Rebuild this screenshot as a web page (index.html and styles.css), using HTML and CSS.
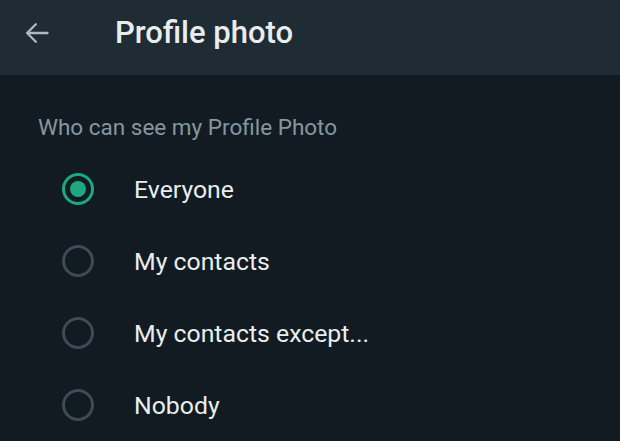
FILE: index.html
```html
<!DOCTYPE html>
<html>
<head>
    <link rel="stylesheet" href="styles.css">
</head>
<body>
  <header class="topbar">
    <button type="button" class="back" aria-label="Back">
      <svg width="28" height="28" viewBox="0 0 24 24" fill="none" xmlns="http://www.w3.org/2000/svg">
        <path d="M21 12H4" stroke="#aebac1" stroke-width="2" stroke-linecap="round"/>
        <path d="M11 4.5L3.5 12L11 19.5" stroke="#aebac1" stroke-width="2" stroke-linecap="round" stroke-linejoin="round"/>
      </svg>
    </button>
    <h1 class="title">Profile photo</h1>
  </header>

  <main class="content">
    <p class="section-label">Who can see my Profile Photo</p>

    <form class="options">
      <label class="option">
        <input type="radio" name="visibility" value="everyone" checked>
        <span class="radio"></span>
        <span class="option-text">Everyone</span>
      </label>
      <label class="option">
        <input type="radio" name="visibility" value="contacts">
        <span class="radio"></span>
        <span class="option-text">My contacts</span>
      </label>
      <label class="option">
        <input type="radio" name="visibility" value="except">
        <span class="radio"></span>
        <span class="option-text">My contacts except...</span>
      </label>
      <label class="option">
        <input type="radio" name="visibility" value="nobody">
        <span class="radio"></span>
        <span class="option-text">Nobody</span>
      </label>
    </form>
  </main>
</body>
</html>
```

FILE: styles.css
```css
body {
    margin: 0;
    background-color: #111b21;
    font-family: Roboto, "Noto Sans", sans-serif;
    color: #e9edef;
    height: 441px;
    overflow: hidden;
}

.topbar {
    height: 75px;
    background-color: #1f2c33;
    display: flex;
    align-items: center;
}

.back {
    background: none;
    border: none;
    padding: 0;
    margin-left: 23px;
    width: 28px;
    height: 28px;
    margin-top: -10px;
    display: flex;
}

.title {
    margin: 0 0 0 64px;
    margin-top: -10px;
    font-size: 31px;
    font-weight: 500;
    color: #e9edef;
}

.content {
    padding-top: 38px;
}

.section-label {
    margin: 0 0 0 38px;
    font-size: 22.5px;
    color: #8696a0;
    line-height: 28px;
}

.options {
    display: flex;
    flex-direction: column;
    padding-top: 12px;
}

.option {
    display: flex;
    align-items: center;
    height: 72px;
    padding-left: 62px;
}

.option input {
    display: none;
}

.radio {
    width: 26px;
    height: 26px;
    border: 3px solid #3e4c55;
    border-radius: 50%;
    box-sizing: content-box;
    position: relative;
}

.option input:checked + .radio {
    border-color: #1da882;
}

.option input:checked + .radio::after {
    content: "";
    position: absolute;
    left: 5px;
    top: 5px;
    width: 16px;
    height: 16px;
    border-radius: 50%;
    background-color: #1da882;
}

.option-text {
    margin-left: 40px;
    font-size: 24.8px;
    color: #e9edef;
}
```
